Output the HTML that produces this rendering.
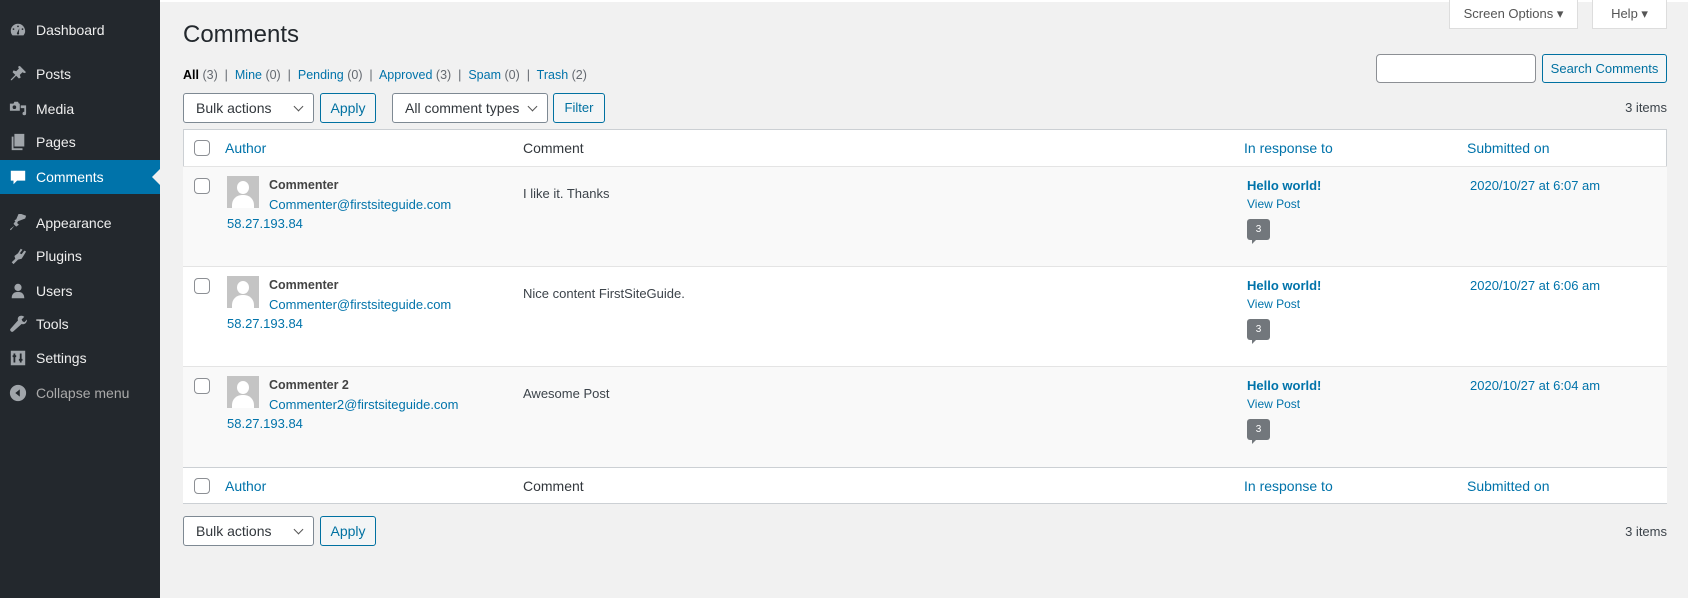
<!DOCTYPE html>
<html><head><meta charset="utf-8">
<style>
*{box-sizing:border-box;margin:0;padding:0}
body{width:1688px;height:600px;overflow:hidden;background:#f1f1f1;font-family:"Liberation Sans",sans-serif;font-size:13px;color:#3c434a;position:relative}
.abs{position:absolute;white-space:nowrap}
#side{position:absolute;left:0;top:0;width:160px;height:600px;background:#23282d}
.mi{position:absolute;left:0;width:160px;height:34px;color:#eee;font-size:14px;line-height:34px}
.mi span{position:absolute;left:36px}
.mi svg{position:absolute;left:9px;top:8px;width:18px;height:18px;fill:#a0a5aa}
.mi.act{background:#0073aa;color:#fff}
.mi.act svg{fill:#fff}
a{color:#0073aa;text-decoration:none}
.btn{position:absolute;border:1px solid #0071a1;color:#0071a1;background:#f3f5f6;border-radius:3px;font-size:13px;text-align:center;line-height:28px;height:30px}
.sel{position:absolute;border:1px solid #7e8993;background:#fff;border-radius:3px;height:30px;line-height:28px;padding-left:12px;font-size:14px;color:#32373c}
.sel:after{content:"";position:absolute;right:11px;top:9px;width:6px;height:6px;border-right:1.5px solid #555;border-bottom:1.5px solid #555;transform:rotate(45deg)}
.cb{position:absolute;width:16px;height:16px;border:1px solid #8c8f94;border-radius:4px;background:#fff}
.av{position:absolute;width:32px;height:32px;background:#c4c4c4;overflow:hidden}
.av:before{content:"";position:absolute;left:10px;top:5px;width:12px;height:13px;border-radius:50%;background:#fff}
.av:after{content:"";position:absolute;left:5px;top:19px;width:22px;height:20px;border-radius:10px 10px 0 0;background:#fff}
.bub{position:absolute;width:23px;height:21px;background:#72777c;border-radius:3px;color:#fff;font-size:10px;text-align:center;line-height:21px}
.bub:after{content:"";position:absolute;left:5px;bottom:-4px;border-left:4px solid #72777c;border-bottom:4px solid transparent}
.row{position:absolute;left:183px;width:1484px;border-top:1px solid #e4e4e4}
.nm{font-weight:bold;color:#444;font-size:12.5px}
</style></head><body>
<div style="position:absolute;left:0;top:0;width:1688px;height:2px;background:#fff"></div>
<div id="side">
<div class="mi" style="top:13px"><svg viewBox="0 0 20 20"><path d="M10 3a8 8 0 0 0-8 8c0 2 .7 3.6 1.9 5h12.2A8 8 0 0 0 10 3zm0 2a1 1 0 1 1 0 2 1 1 0 0 1 0-2zM5 8a1 1 0 1 1 0 2 1 1 0 0 1 0-2zm10 0a1 1 0 1 1 0 2 1 1 0 0 1 0-2zM11.5 8l-.5 5a1.3 1.3 0 1 1-2 0z"/></svg><span>Dashboard</span></div>
<div class="mi" style="top:57px"><svg viewBox="0 0 20 20"><path d="M12 1l7 7-2 1-2-1-3 3 1 3-2 1-3-3-5 5H2v-1l5-5-3-3 1-2 3 1 3-3-1-2z"/></svg><span>Posts</span></div>
<div class="mi" style="top:92px"><svg viewBox="0 0 20 20"><path d="M1 4h4l1-2h4l1 2h1v8H1zm5 2a2 2 0 1 0 0 4 2 2 0 0 0 0-4zM13 6h6v9a2 2 0 1 1-2-2V9h-4z"/></svg><span>Media</span></div>
<div class="mi" style="top:125px"><svg viewBox="0 0 20 20"><path d="M6 1h11v14H6zM3 4h2v13h10v2H3z"/></svg><span>Pages</span></div>
<div class="mi act" style="top:160px"><svg viewBox="0 0 20 20"><path d="M2 3h16v11H9l-4 4v-4H2z"/></svg><span>Comments</span>
<div style="position:absolute;right:0;top:9px;border-right:8px solid #f1f1f1;border-top:8px solid transparent;border-bottom:8px solid transparent"></div></div>
<div class="mi" style="top:206px"><svg viewBox="0 0 20 20"><path d="M19 2l-1 3-8 3-1 2-3-3 2-1 3-7zM8 11l-2 2-4 5-1-1 5-4 2-2zM7 8l4 4-3 2-3-3z"/></svg><span>Appearance</span></div>
<div class="mi" style="top:239px"><svg viewBox="0 0 20 20"><path d="M13 2l2 1-3 4 2 1 3-4 2 1-3 5-2 3-4 1-5 5-2-2 4-4-1-3 4-3z"/></svg><span>Plugins</span></div>
<div class="mi" style="top:274px"><svg viewBox="0 0 20 20"><path d="M10 2a4 4 0 1 1 0 8 4 4 0 0 1 0-8zM3 18c0-5 3-7 7-7s7 2 7 7z"/></svg><span>Users</span></div>
<div class="mi" style="top:307px"><svg viewBox="0 0 20 20"><path d="M17 2l-3 3 1 2 2 1 3-3c0 4-3 6-6 5L5 18a2 2 0 0 1-3-3l8-9c-1-3 1-6 5-5z"/></svg><span>Tools</span></div>
<div class="mi" style="top:341px"><svg viewBox="0 0 20 20"><path d="M2 2h16v16H2zm3 3v2H4v2h1v6h2V9h1V7H7V5zm7 0v6h-1v2h1v2h2v-2h1v-2h-1V5z"/></svg><span>Settings</span></div>
<div class="mi" style="top:376px;color:#aaa"><svg viewBox="0 0 20 20"><path d="M10 1a9 9 0 1 1 0 18 9 9 0 0 1 0-18zm2 5l-5 4 5 4z"/></svg><span>Collapse menu</span></div>
</div>

<div class="abs" style="left:183px;top:21px;font-size:24px;color:#23282d">Comments</div>
<div class="abs" style="left:183px;top:68px;font-size:12.5px;color:#646970"><b style="color:#000;font-weight:600">All</b> (3) &nbsp;|&nbsp; <a>Mine</a> (0) &nbsp;|&nbsp; <a>Pending</a> (0) &nbsp;|&nbsp; <a>Approved</a> (3) &nbsp;|&nbsp; <a>Spam</a> (0) &nbsp;|&nbsp; <a>Trash</a> (2)</div>

<div class="sel" style="left:183px;top:93px;width:131px">Bulk actions</div>
<div class="btn" style="left:320px;top:93px;width:56px;font-size:14px">Apply</div>
<div class="sel" style="left:392px;top:93px;width:156px">All comment types</div>
<div class="btn" style="left:553px;top:93px;width:52px">Filter</div>

<div class="abs" style="left:1449px;top:-1px;width:129px;height:30px;background:#fff;border:1px solid #ddd;border-top:none;color:#555;font-size:13px;line-height:30px;text-align:center">Screen Options ▾</div>
<div class="abs" style="left:1592px;top:-1px;width:75px;height:30px;background:#fff;border:1px solid #ddd;border-top:none;color:#555;font-size:13px;line-height:30px;text-align:center">Help ▾</div>

<div class="abs" style="left:1376px;top:54px;width:160px;height:29px;background:#fff;border:1px solid #8c8f94;border-radius:4px"></div>
<div class="btn" style="left:1542px;top:54px;width:125px;height:29px">Search Comments</div>
<div class="abs" style="right:21px;top:100px;font-size:13px">3 items</div>

<div class="abs" style="left:183px;top:129px;width:1484px;height:375px;border:1px solid #ccd0d4;background:#fff"></div>
<div class="row" style="top:166px;height:100px;background:#f9f9f9"></div>
<div class="row" style="top:266px;height:100px;background:#fff"></div>
<div class="row" style="top:366px;height:101px;background:#f9f9f9"></div>
<div class="row" style="top:467px;height:36px;background:#fff;border-color:#ccd0d4"></div>

<div class="cb" style="left:194px;top:140px"></div>
<a class="abs" style="left:225px;top:140px;font-size:14px">Author</a>
<div class="abs" style="left:523px;top:140px;font-size:14px;color:#32373c">Comment</div>
<a class="abs" style="left:1244px;top:140px;font-size:14px">In response to</a>
<a class="abs" style="left:1467px;top:140px;font-size:14px">Submitted on</a>

<div class="cb" style="left:194px;top:478px"></div>
<a class="abs" style="left:225px;top:478px;font-size:14px">Author</a>
<div class="abs" style="left:523px;top:478px;font-size:14px;color:#32373c">Comment</div>
<a class="abs" style="left:1244px;top:478px;font-size:14px">In response to</a>
<a class="abs" style="left:1467px;top:478px;font-size:14px">Submitted on</a>

<div class="cb" style="left:194px;top:178px"></div>
<div class="av" style="left:227px;top:176px"></div>
<div class="abs nm" style="left:269px;top:178px">Commenter</div>
<a class="abs" style="left:269px;top:197px">Commenter@firstsiteguide.com</a>
<a class="abs" style="left:227px;top:216px">58.27.193.84</a>
<div class="abs" style="left:523px;top:186px">I like it. Thanks</div>
<a class="abs" style="left:1247px;top:178px;font-weight:bold">Hello world!</a>
<a class="abs" style="left:1247px;top:197px;font-size:12px">View Post</a>
<div class="bub" style="left:1247px;top:219px">3</div>
<a class="abs" style="left:1470px;top:178px">2020/10/27 at 6:07 am</a>

<div class="cb" style="left:194px;top:278px"></div>
<div class="av" style="left:227px;top:276px"></div>
<div class="abs nm" style="left:269px;top:278px">Commenter</div>
<a class="abs" style="left:269px;top:297px">Commenter@firstsiteguide.com</a>
<a class="abs" style="left:227px;top:316px">58.27.193.84</a>
<div class="abs" style="left:523px;top:286px">Nice content FirstSiteGuide.</div>
<a class="abs" style="left:1247px;top:278px;font-weight:bold">Hello world!</a>
<a class="abs" style="left:1247px;top:297px;font-size:12px">View Post</a>
<div class="bub" style="left:1247px;top:319px">3</div>
<a class="abs" style="left:1470px;top:278px">2020/10/27 at 6:06 am</a>

<div class="cb" style="left:194px;top:378px"></div>
<div class="av" style="left:227px;top:376px"></div>
<div class="abs nm" style="left:269px;top:378px">Commenter 2</div>
<a class="abs" style="left:269px;top:397px">Commenter2@firstsiteguide.com</a>
<a class="abs" style="left:227px;top:416px">58.27.193.84</a>
<div class="abs" style="left:523px;top:386px">Awesome Post</div>
<a class="abs" style="left:1247px;top:378px;font-weight:bold">Hello world!</a>
<a class="abs" style="left:1247px;top:397px;font-size:12px">View Post</a>
<div class="bub" style="left:1247px;top:419px">3</div>
<a class="abs" style="left:1470px;top:378px">2020/10/27 at 6:04 am</a>

<div class="sel" style="left:183px;top:516px;width:131px">Bulk actions</div>
<div class="btn" style="left:320px;top:516px;width:56px;font-size:14px">Apply</div>
<div class="abs" style="right:21px;top:524px;font-size:13px">3 items</div>
<div class="abs" style="left:0;top:598px;width:1688px;height:2px;background:#fff"></div>
</body></html>
